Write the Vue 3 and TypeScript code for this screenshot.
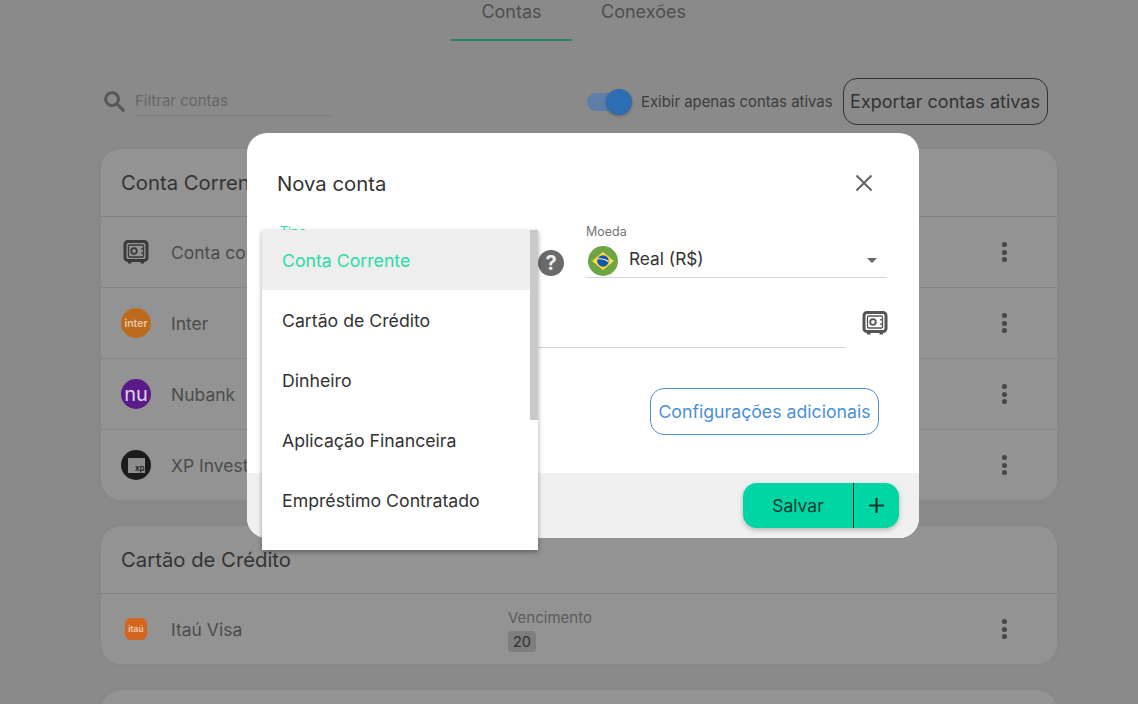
<script setup lang="ts">
// Tela de contas com o modal "Nova conta" aberto e o select de tipo expandido.
interface Conta {
  nome: string;
  logo: "cofre" | "inter" | "nu" | "xp" | "itau";
}

const correntes: Conta[] = [
  { nome: "Conta corrente", logo: "cofre" },
  { nome: "Inter", logo: "inter" },
  { nome: "Nubank", logo: "nu" },
  { nome: "XP Investimentos", logo: "xp" },
];

const tipos = [
  "Conta Corrente",
  "Cartão de Crédito",
  "Dinheiro",
  "Aplicação Financeira",
  "Empréstimo Contratado",
];
</script>

<template>
  <div class="screen">
    <main class="page">
      <nav class="tabs">
        <a class="tab tab--active">Contas</a>
        <a class="tab">Conexões</a>
      </nav>

      <div class="toolbar">
        <svg class="search-icon" viewBox="0 0 24 24"><path d="M15.5 14h-.79l-.28-.27A6.47 6.47 0 0 0 16 9.5 6.5 6.5 0 1 0 9.5 16c1.61 0 3.09-.59 4.23-1.57l.27.28v.79l5 4.99L20.49 19l-4.99-5zm-6 0C7.01 14 5 11.99 5 9.5S7.01 5 9.5 5 14 7.01 14 9.5 11.99 14 9.5 14z" /></svg>
        <div class="filter">Filtrar contas</div>
        <div class="switch"><span class="switch-track"></span><span class="switch-knob"></span></div>
        <span class="switch-label">Exibir apenas contas ativas</span>
        <button class="export-btn">Exportar contas ativas</button>
      </div>

      <section class="card">
        <h2 class="card-title">Conta Corrente</h2>
        <div v-for="conta in correntes" :key="conta.nome" class="row">
          <span class="logo-slot">
            <svg v-if="conta.logo === 'cofre'" class="safe safe--dim" viewBox="0 0 28 28">
              <rect x="3" y="3.5" width="22" height="19" rx="3" />
              <rect class="safe-door" x="6.5" y="7" width="15" height="12" rx="1" />
              <circle cx="12" cy="13" r="2.8" />
              <path d="M20 10v1.5M20 14.5V16" />
              <path class="safe-feet" d="M6 24.5h3.5M18.5 24.5H22" />
            </svg>
            <span v-else-if="conta.logo === 'inter'" class="logo logo--inter">inter</span>
            <span v-else-if="conta.logo === 'nu'" class="logo logo--nu">nu</span>
            <span v-else class="logo logo--xp"><span class="xp-box">xp</span></span>
          </span>
          <span class="row-name">{{ conta.nome }}</span>
          <span class="dots"><i></i><i></i><i></i></span>
        </div>
      </section>

      <section class="card">
        <h2 class="card-title">Cartão de Crédito</h2>
        <div class="row">
          <span class="logo-slot"><span class="logo logo--itau">itaú</span></span>
          <span class="row-name row-name--fixed">Itaú Visa</span>
          <div class="due">
            <span class="due-label">Vencimento</span>
            <span class="due-day">20</span>
          </div>
          <span class="dots"><i></i><i></i><i></i></span>
        </div>
      </section>

      <section class="card card--empty"></section>
    </main>

    <div class="scrim">
      <div class="modal" role="dialog" aria-modal="true">
        <div class="modal-body">
          <header class="modal-head">
            <h3>Nova conta</h3>
            <svg class="close" viewBox="0 0 24 24"><path d="M3 3l18 18M21 3L3 21" /></svg>
          </header>

          <div class="fields">
            <div class="field field--tipo">
              <label class="field-label field-label--on">Tipo</label>
              <div class="field-line"></div>
            </div>
            <svg class="help" viewBox="0 0 26 26">
              <circle cx="13" cy="13" r="13" />
              <text x="13" y="20" text-anchor="middle">?</text>
            </svg>
            <div class="field field--moeda">
              <label class="field-label">Moeda</label>
              <div class="field-line moeda-value">
                <svg class="flag" viewBox="0 0 30 30">
                  <circle cx="15" cy="15" r="15" fill="#6da544" />
                  <path d="M15 5.9 26 15 15 24.1 4 15z" fill="#ffda44" />
                  <circle cx="15" cy="15" r="5.8" fill="#1257a8" />
                  <path d="M9.5 13.4c3.8-.5 7.8.5 10.9 3l.3-1.3c-3.2-2.3-7.3-3.2-11-2.8z" fill="#f0f0f0" />
                </svg>
                <span class="moeda-name">Real (R$)</span>
                <span class="caret"></span>
              </div>
            </div>
          </div>

          <div class="name-row">
            <div class="name-line"></div>
            <svg class="safe" viewBox="0 0 28 28">
              <rect x="3" y="3.5" width="22" height="19" rx="3" />
              <rect class="safe-door" x="6.5" y="7" width="15" height="12" rx="1" />
              <circle cx="12" cy="13" r="2.8" />
              <path d="M20 10v1.5M20 14.5V16" />
              <path class="safe-feet" d="M6 24.5h3.5M18.5 24.5H22" />
            </svg>
          </div>

          <div class="config-row">
            <button class="config-btn">Configurações adicionais</button>
          </div>
        </div>

        <footer class="modal-foot">
          <div class="save-group">
            <button class="save-btn">Salvar</button>
            <button class="save-plus">
              <svg viewBox="0 0 16 16"><path d="M7 1h2v6h6v2H9v6H7V9H1V7h6z" /></svg>
            </button>
          </div>
        </footer>

        <div class="dropdown">
          <ul class="option-list">
            <li v-for="(tipo, i) in tipos" :key="tipo" class="option" :class="{ 'option--on': i === 0 }">{{ tipo }}</li>
          </ul>
          <span class="dropdown-thumb"></span>
        </div>
      </div>
    </div>
  </div>
</template>

<style scoped>
.screen {
  position: relative;
  width: 1138px;
  height: 704px;
  overflow: hidden;
  background: #8a8a8a;
  font-family: Inter, "Liberation Sans", sans-serif;
  color: #333;
}

/* ========== página (já escurecida pelo modal) ========== */

.page {
  padding: 0 81px 0 101px;
}

.tabs {
  display: flex;
  height: 41px;
  margin-left: 350px;
}

.tab {
  width: 121px;
  height: 41px;
  box-sizing: border-box;
  padding-top: 1px;
  text-align: center;
  font-size: 18px;
  line-height: 22px;
  color: #4e4e4e;
}

.tab + .tab {
  width: 143px;
}

.tab--active {
  border-bottom: 2px solid #2a8068;
}

.toolbar {
  display: flex;
  align-items: center;
  height: 47px;
  margin-top: 37px;
}

.search-icon {
  width: 28px;
  height: 28px;
  margin: 0 6px 0 0;
  fill: #555;
  stroke: #555;
  stroke-width: 0.5;
}

.filter {
  width: 196px;
  height: 26px;
  margin-top: 3px;
  box-sizing: border-box;
  border-bottom: 1px solid #7a7a7a;
  font-size: 15px;
  line-height: 22px;
  color: #666;
}

.switch {
  position: relative;
  flex: none;
  width: 45px;
  height: 26px;
  margin-left: 256px;
}

.switch-track {
  position: absolute;
  left: 0;
  top: 4px;
  width: 40px;
  height: 18px;
  border-radius: 9px;
  background: #5d7ea8;
}

.switch-knob {
  position: absolute;
  right: 0;
  top: 0;
  width: 26px;
  height: 26px;
  border-radius: 50%;
  background: #2d6db2;
  box-shadow: 0 1px 3px rgba(0, 0, 0, 0.3);
}

.switch-label {
  margin-left: 9px;
  font-size: 14.9px;
  color: #3c3c3c;
  white-space: nowrap;
}

.export-btn {
  flex: none;
  width: 205px;
  height: 47px;
  margin-left: 10px;
  padding: 0;
  border: 1px solid #333;
  border-radius: 14px;
  background: transparent;
  font: inherit;
  font-size: 18px;
  color: #333;
  white-space: nowrap;
}

.card {
  width: 956px;
  margin-top: 24px;
  border-radius: 20px;
  background: #939393;
  box-shadow: 0 0 6px rgba(0, 0, 0, 0.04);
  overflow: hidden;
}

.card--empty {
  height: 60px;
}

.card + .card {
  margin-top: 26px;
}

.card-title {
  height: 68px;
  margin: 0;
  padding: 0 20px;
  box-sizing: border-box;
  border-bottom: 1px solid #7f7f7f;
  font-size: 20.3px;
  font-weight: 400;
  line-height: 68px;
  color: #333;
}

.row {
  display: flex;
  align-items: center;
  height: 71px;
  padding: 0 50px 0 20px;
  border-top: 1px solid #858585;
  box-sizing: border-box;
}

.card-title + .row {
  height: 70px;
  border-top: 0;
}

.logo-slot {
  display: flex;
  justify-content: center;
  width: 30px;
  margin-right: 20px;
}

.row-name {
  flex: 1;
  font-size: 17.5px;
  color: #4c4c4c;
}

.row-name--fixed {
  flex: 0 0 337px;
}

.logo {
  display: flex;
  align-items: center;
  justify-content: center;
  width: 30px;
  height: 30px;
  border-radius: 50%;
  font-weight: 600;
}

.logo--inter {
  background: #bd6a1c;
  color: #e8c9a8;
  font-size: 10.5px;
}

.logo--nu {
  background: #5a1b8a;
  color: #e3d3ec;
  font-size: 20px;
  font-weight: 400;
  line-height: 26px;
}

.logo--xp {
  background: #1b1b1b;
}

.xp-box {
  width: 17px;
  height: 15px;
  padding-top: 6px;
  box-sizing: border-box;
  background: #8d8d8d;
  color: #1b1b1b;
  font-size: 8px;
  line-height: 9px;
  text-align: right;
}

.logo--itau {
  width: 22px;
  height: 22px;
  border-radius: 6px;
  background: #d4651e;
  color: #eed0b8;
  font-size: 8.5px;
}

.safe {
  flex: none;
  width: 28px;
  height: 28px;
  margin: 1px -2px 0 0;
  fill: none;
  stroke: #555;
}

.safe rect:first-child {
  stroke-width: 3;
}

.safe-door {
  stroke-width: 1.3;
}

.safe circle {
  stroke-width: 1.8;
}

.safe path {
  stroke-width: 1.8;
}

.safe .safe-feet {
  stroke-width: 2.2;
}

.safe--dim {
  margin: 0;
  stroke: #3a3a3a;
}

.due {
  display: flex;
  flex: 1;
  flex-direction: column;
  align-items: flex-start;
  gap: 4px;
  margin-top: 2px;
}

.due-label {
  font-size: 15px;
  color: #5c5c5c;
}

.due-day {
  padding: 1px 5px;
  border-radius: 4px;
  background: #7e7e7e;
  font-size: 14.5px;
  line-height: 19px;
  color: #303030;
}

.dots {
  display: flex;
  flex-direction: column;
  gap: 2.5px;
  width: 5px;
}

.dots i {
  width: 5px;
  height: 5px;
  border-radius: 50%;
  background: #464646;
}

/* ========== modal ========== */

.scrim {
  position: absolute;
  inset: 0;
}

.modal {
  position: absolute;
  left: 247px;
  top: 133px;
  display: flex;
  flex-direction: column;
  width: 672px;
  height: 405px;
  border-radius: 20px;
  background: #fff;
}

.modal-body {
  flex: 1;
  padding: 0 32px 0 30px;
}

.modal-head {
  display: flex;
  align-items: center;
  justify-content: space-between;
  height: 100px;
}

.modal-head h3 {
  margin: 0;
  font-size: 20.3px;
  font-weight: 400;
  color: #333;
}

.close {
  width: 20px;
  height: 20px;
  margin-right: 13px;
  fill: none;
  stroke: #616161;
  stroke-width: 2.4;
}

.fields {
  display: flex;
  align-items: flex-start;
  margin-top: -9px;
}

.field-label {
  display: block;
  height: 16px;
  font-size: 12.5px;
  line-height: 16px;
  color: #757575;
}

.field-label--on {
  padding-left: 3px;
  color: #2adba8;
}

.field-line {
  border-bottom: 1px solid #d5d5d5;
}

.field--tipo {
  width: 248px;
}

.field--tipo .field-line {
  height: 37px;
}

.help {
  flex: none;
  width: 26px;
  height: 26px;
  margin: 26px 22px 0 13px;
  fill: #6a6a6a;
}

.help text {
  fill: #eee;
  font-size: 20px;
  font-weight: 700;
}

.field--moeda {
  flex: 1;
}

.moeda-value {
  display: flex;
  align-items: center;
  height: 37px;
}

.flag {
  flex: none;
  width: 30px;
  height: 30px;
  margin: 5px 11px 0 2px;
}

.moeda-name {
  flex: 1;
  font-size: 17.3px;
  color: #333;
}

.caret {
  width: 0;
  height: 0;
  margin: 3px 10px 0 0;
  border: 5px solid transparent;
  border-top: 5px solid #666;
  border-bottom: 0;
}

.name-row {
  display: flex;
  align-items: flex-start;
  justify-content: space-between;
  margin-top: 30px;
}

.name-line {
  width: 568px;
  height: 39px;
  border-bottom: 1px solid #d5d5d5;
}

.config-row {
  display: flex;
  justify-content: flex-end;
  margin-top: 40px;
}

.config-btn {
  width: 229px;
  height: 47px;
  margin-right: 8px;
  padding: 0;
  border: 1px solid #4a90d9;
  border-radius: 14px;
  background: #fff;
  font: inherit;
  font-size: 17.7px;
  color: #4a90d9;
  white-space: nowrap;
}

.modal-foot {
  display: flex;
  justify-content: flex-end;
  height: 65px;
  padding: 10px 20px 0 0;
  box-sizing: border-box;
  border-radius: 0 0 20px 20px;
  background: #f0f0f0;
}

.save-group {
  display: flex;
  height: 45px;
  border-radius: 14px;
  background: #00d6a3;
  box-shadow: 0 2px 5px rgba(0, 0, 0, 0.25);
}

.save-btn,
.save-plus {
  padding: 0;
  border: 0;
  background: transparent;
  font: inherit;
  font-size: 17.5px;
  color: #1b3a33;
}

.save-btn {
  width: 111px;
  border-right: 1px solid #123;
}

.save-plus {
  display: flex;
  align-items: center;
  justify-content: center;
  width: 45px;
}

.save-plus svg {
  width: 17px;
  height: 17px;
  fill: #14352d;
}

/* ========== dropdown do select ========== */

.dropdown {
  position: absolute;
  left: 15px;
  top: 97px;
  width: 276px;
  height: 320px;
  background: #fff;
  box-shadow: 0 2px 5px rgba(0, 0, 0, 0.35);
  overflow: hidden;
}

.option-list {
  margin: 0;
  padding: 0;
  list-style: none;
}

.option {
  height: 60px;
  margin-right: 8px;
  padding-left: 20px;
  font-size: 17.7px;
  line-height: 62px;
  color: #333;
}

.option--on {
  background: #eee;
  color: #2adba8;
}

.dropdown-thumb {
  position: absolute;
  right: 0;
  top: 0;
  width: 8px;
  height: 190px;
  background: #c9c9c9;
}
</style>

<style>
html,
body {
  margin: 0;
  overflow: hidden;
}
</style>
